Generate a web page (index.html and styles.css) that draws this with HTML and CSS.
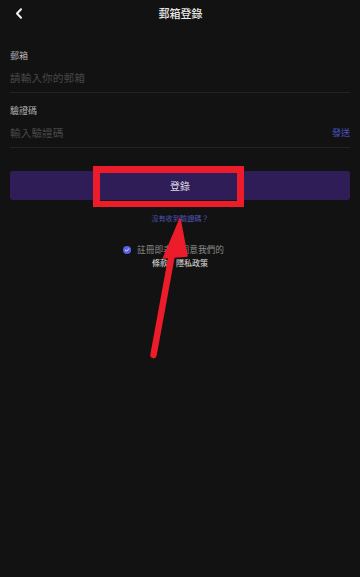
FILE: index.html
```html
<!DOCTYPE html>
<html lang="zh-Hant">
<head>
<meta charset="utf-8">
<title>郵箱登錄</title>
<link rel="stylesheet" href="styles.css">
</head>
<body>
<div class="page">
  <header class="topbar">
    <span class="back">
      <svg width="8" height="11" viewBox="0 0 8 11"><path d="M6 1.2 L2 5.5 L6 9.8" fill="none" stroke="#f0f0f0" stroke-width="2" stroke-linecap="round" stroke-linejoin="round"/></svg>
    </span>
    <h1 class="title">郵箱登錄</h1>
    <span class="spacer"></span>
  </header>

  <main class="form">
    <div class="field">
      <div class="label">郵箱</div>
      <div class="input-row"><span class="placeholder">請輸入你的郵箱</span></div>
    </div>
    <div class="field">
      <div class="label">驗證碼</div>
      <div class="input-row"><span class="placeholder">輸入驗證碼</span><span class="send">發送</span></div>
    </div>

    <button class="login">登錄</button>
    <div class="resend">沒有收到驗證碼？</div>

    <div class="agree">
      <div class="agree-line">
        <span class="check">
          <svg width="8" height="8" viewBox="0 0 8 8"><circle cx="4" cy="4" r="4" fill="#5a5fe6"/><path d="M2.3 4.1 L3.5 5.2 L5.8 2.9" fill="none" stroke="#fff" stroke-width="0.9" stroke-linecap="round" stroke-linejoin="round"/></svg>
        </span>
        <span class="grey">註冊即表示同意我們的</span>
      </div>
      <div class="agree-line2"><span class="link">條款</span><span class="grey">和</span><span class="link">隱私政策</span></div>
    </div>
  </main>

  <div class="mark-box"></div>
  <svg class="mark-arrow" width="360" height="577" viewBox="0 0 360 577">
    <line x1="153.5" y1="355" x2="172" y2="254" stroke="#ec1c2a" stroke-width="6.5" stroke-linecap="round"/>
    <polygon points="180,219 163.5,258 187,256" fill="#ec1c2a" stroke="#ec1c2a" stroke-width="1.5" stroke-linejoin="round"/>
  </svg>
</div>
</body>
</html>
```

FILE: styles.css
```css
* { box-sizing: border-box; }
html, body { margin: 0; padding: 0; }
body {
  background: #121212;
  font-family: "Noto Sans CJK TC", "Noto Sans", sans-serif;
  color: #e6e6e6;
}
.page {
  position: relative;
  width: 360px;
  height: 577px;
  overflow: hidden;
}
.topbar {
  height: 26px;
  display: flex;
  align-items: center;
  padding: 0 14px 0 15px;
}
.back {
  width: 8px;
  height: 11px;
  display: flex;
}
.title {
  flex: 1;
  margin: 0;
  text-align: center;
  font-size: 11px;
  line-height: 26px;
  font-weight: 500;
  color: #e8e8e8;
  padding-right: 8px;
}
.spacer { width: 0; }
.form {
  padding: 12px 10px 0;
}
.field {
  padding: 11px 0 5px;
  border-bottom: 1px solid #222222;
}
.label {
  font-size: 9px;
  line-height: 14px;
  color: #b4b4b4;
}
.input-row {
  margin-top: 4px;
  height: 20px;
  display: flex;
  align-items: center;
  justify-content: space-between;
}
.placeholder {
  font-size: 10.7px;
  color: #474747;
}
.send {
  font-size: 9px;
  color: #4d54c6;
}
.login {
  display: block;
  width: 100%;
  height: 29px;
  margin-top: 23px;
  border: 0;
  border-radius: 3px;
  background: #2e1d57;
  color: #dcdce4;
  font-family: inherit;
  font-size: 10px;
  padding: 0;
}
.resend {
  margin-top: 12px;
  text-align: center;
  font-size: 7.2px;
  line-height: 12px;
  color: #4e55b4;
}
.agree {
  margin-top: 19px;
  text-align: center;
}
.agree-line {
  display: flex;
  justify-content: center;
  align-items: center;
  gap: 6px;
  height: 13px;
  padding-right: 13px;
}
.check { display: flex; width: 8px; height: 8px; }
.grey {
  font-size: 8.7px;
  color: #8a8a8a;
}
.agree-line2 {
  height: 13px;
  display: flex;
  justify-content: center;
  align-items: center;
}
.agree-line2 .grey { font-size: 8px; color: #121212; }
.link {
  font-size: 8px;
  color: #e0e0e0;
}
.mark-box {
  position: absolute;
  left: 93px;
  top: 166px;
  width: 151px;
  height: 41px;
  border: 7px solid #ec1c2a;
  border-bottom-width: 6px;
}
.mark-arrow {
  position: absolute;
  left: 0;
  top: 0;
  pointer-events: none;
}
```
